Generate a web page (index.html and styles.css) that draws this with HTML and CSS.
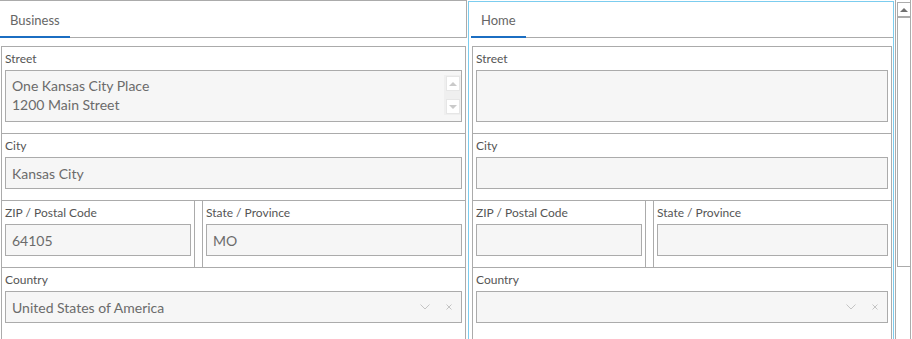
FILE: index.html
```html
<!doctype html>
<html lang="en">
<head>
  <meta charset="utf-8">
  <title>Addresses</title>
  <link rel="stylesheet" href="styles.css">
</head>
<body>
<div class="page">
  <section class="panel panel--business">
    <div class="tabs">
      <span class="tab">Business</span>
    </div>
    <div class="form">
      <div class="row">
        <div class="label">Street</div>
        <div class="field field--area">
          <div class="field__text">One Kansas City Place<br>1200 Main Street</div>
          <div class="spin">
            <span class="spin__btn"><i class="arrow arrow--up"></i></span>
            <span class="spin__btn"><i class="arrow arrow--down"></i></span>
          </div>
        </div>
      </div>
      <div class="row">
        <div class="label">City</div>
        <div class="field">Kansas City</div>
      </div>
      <div class="row row--split">
        <div class="cell cell--zip">
          <div class="label">ZIP / Postal Code</div>
          <div class="field">64105</div>
        </div>
        <div class="cell cell--state">
          <div class="label">State / Province</div>
          <div class="field">MO</div>
        </div>
      </div>
      <div class="row row--last">
        <div class="label">Country</div>
        <div class="field field--select">
          <span class="field__value">United States of America</span>
          <svg class="chevron" width="10" height="6" viewBox="0 0 10 6"><polyline points="0.5,0.5 5,5 9.5,0.5" fill="none" stroke="#c4c4c4" stroke-width="1"/></svg>
          <svg class="clear" width="6" height="6" viewBox="0 0 6 6"><path d="M0.5 0.5L5.5 5.5M5.5 0.5L0.5 5.5" stroke="#c4c4c4" stroke-width="1"/></svg>
        </div>
      </div>
    </div>
  </section>

  <section class="panel panel--home">
    <div class="tabs">
      <span class="tab">Home</span>
    </div>
    <div class="form">
      <div class="row">
        <div class="label">Street</div>
        <div class="field field--area"></div>
      </div>
      <div class="row">
        <div class="label">City</div>
        <div class="field"></div>
      </div>
      <div class="row row--split">
        <div class="cell cell--zip">
          <div class="label">ZIP / Postal Code</div>
          <div class="field"></div>
        </div>
        <div class="cell cell--state">
          <div class="label">State / Province</div>
          <div class="field"></div>
        </div>
      </div>
      <div class="row row--last">
        <div class="label">Country</div>
        <div class="field field--select">
          <span class="field__value"></span>
          <svg class="chevron" width="10" height="6" viewBox="0 0 10 6"><polyline points="0.5,0.5 5,5 9.5,0.5" fill="none" stroke="#c4c4c4" stroke-width="1"/></svg>
          <svg class="clear" width="6" height="6" viewBox="0 0 6 6"><path d="M0.5 0.5L5.5 5.5M5.5 0.5L0.5 5.5" stroke="#c4c4c4" stroke-width="1"/></svg>
        </div>
      </div>
    </div>
  </section>

  <div class="scroll">
    <div class="scroll__up"><i class="scroll__arrow"></i></div>
    <div class="scroll__thumb"></div>
  </div>
</div>
</body>
</html>
```

FILE: styles.css
```css
* {
  box-sizing: border-box;
}

body {
  margin: 0;
  overflow: hidden;
  background-color: #ffffff;
  font-family: "Lato", "Open Sans", Arial, sans-serif;
  color: #555555;
}

.page {
  display: flex;
  height: 339px;
  overflow: hidden;
}

.panel {
  overflow: hidden;
}

.panel--business {
  width: 467px;
  margin-right: 1px;
}

.panel--home {
  width: 426px;
  margin-top: 1px;
  margin-right: 1px;
  border: 1px solid #7ccdef;
  border-bottom: none;
}

/* tab header */
.tabs {
  display: flex;
  border-bottom: 1px solid #ababab;
}

.panel--business .tabs {
  height: 38px;
  border-top: 1px solid #ababab;
  border-right: 1px solid #ababab;
}

.panel--home .tabs {
  height: 36px;
  margin-left: 2px;
}

.tab {
  display: flex;
  align-items: center;
  padding: 3px 10px 0;
  margin-bottom: -1px;
  border-bottom: 2px solid #1b6ec2;
  font-size: 13px;
  line-height: 16px;
  color: #666666;
}

.panel--home .tab {
  padding-top: 2px;
}

/* form grid */
.form {
  margin-top: 8px;
}

.panel--business .form {
  width: 465px;
  margin-left: 1px;
}

.panel--home .form {
  margin-left: 3px;
  margin-right: 1px;
}

.row,
.cell {
  border: 1px solid #ababab;
  padding: 0 3px 11px;
}

.row + .row {
  margin-top: -1px;
}

.row--split {
  display: flex;
  gap: 7px;
  border: none;
  padding: 0;
}

.cell--state {
  flex: 1;
}

.panel--business .cell--zip {
  width: 194px;
}

.panel--home .cell--zip {
  width: 174px;
}

.row--last {
  padding-bottom: 40px;
}

.label {
  padding: 4px 0 3px;
  font-size: 12px;
  line-height: 16px;
  color: #555555;
}

.field {
  display: flex;
  align-items: center;
  height: 32px;
  padding: 0 6px;
  border: 1px solid #ababab;
  background-color: #f6f6f6;
  font-size: 14px;
  color: #6b6b6b;
}

.field--area {
  align-items: flex-start;
  height: 52px;
  padding: 4px 0 0 6px;
}

.field__text {
  flex: 1;
  margin-top: 1px;
  line-height: 19px;
}

.field--select {
  padding-right: 9px;
}

.field__value {
  flex: 1;
}

.chevron {
  margin-right: 16px;
}

/* little spinner on the street box */
.spin {
  display: flex;
  flex-direction: column;
  justify-content: space-between;
  align-items: center;
  width: 17px;
  height: 40px;
  padding: 1px 0;
  background-color: #efefef;
}

.spin__btn {
  display: flex;
  align-items: center;
  justify-content: center;
  width: 14px;
  height: 15px;
  background-color: #ffffff;
  border: 1px solid #e6e6e6;
}

.arrow {
  width: 0;
  height: 0;
  border-left: 4px solid transparent;
  border-right: 4px solid transparent;
}

.arrow--up {
  border-bottom: 4px solid #cacaca;
}

.arrow--down {
  border-top: 4px solid #cacaca;
}

/* page scrollbar */
.scroll {
  width: 16px;
  padding-left: 1px;
  border-left: 1px solid #ababab;
  border-right: 1px solid #ababab;
}

.scroll__up {
  display: flex;
  align-items: center;
  justify-content: center;
  height: 15px;
  margin-top: 2px;
  border: 1px solid #ababab;
  border-right: none;
}

.scroll__arrow {
  width: 0;
  height: 0;
  border-left: 4px solid transparent;
  border-right: 4px solid transparent;
  border-bottom: 4px solid #707070;
}

.scroll__thumb {
  height: 250px;
  border: 1px solid #ababab;
  border-right: none;
}
```
